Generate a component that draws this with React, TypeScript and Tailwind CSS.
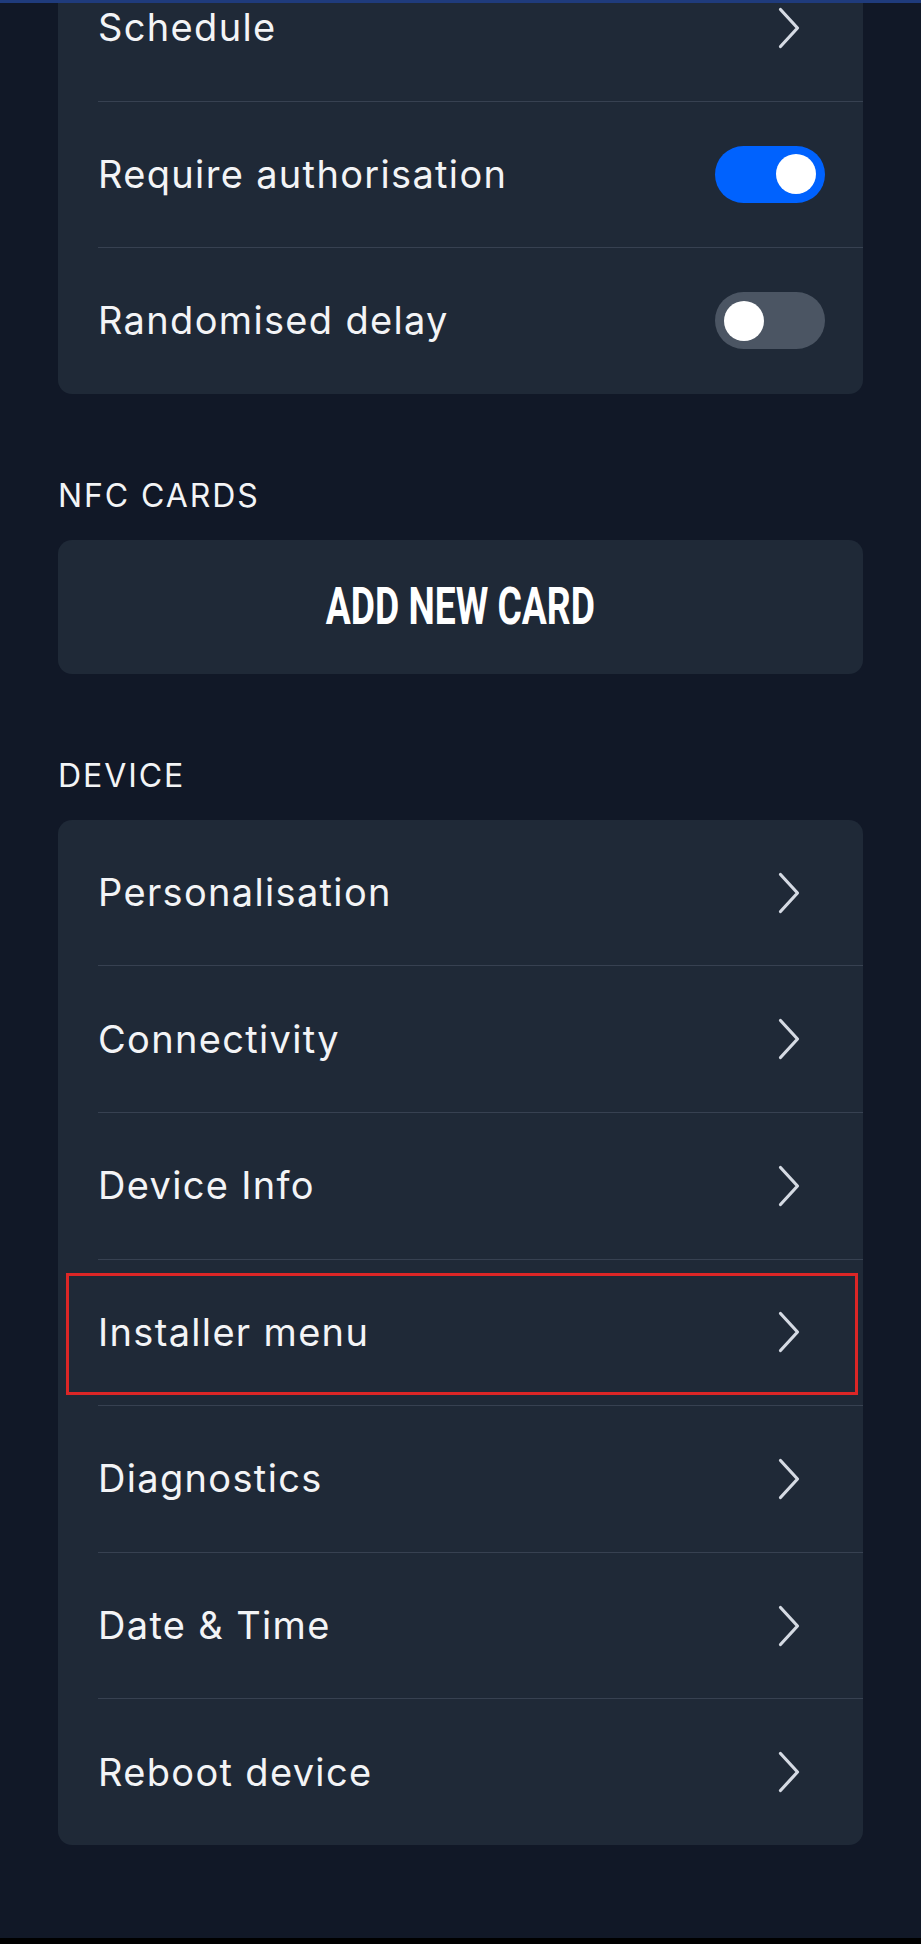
import { ReactNode } from "react";

const Chevron = () => (
  <svg width="24" height="42" viewBox="0 0 24 42" fill="none" className="shrink-0">
    <path
      d="M3.5 2.5 L20.5 21 L3.5 39.5"
      stroke="#d5dae3"
      strokeWidth="3.2"
      strokeLinecap="round"
      strokeLinejoin="round"
    />
  </svg>
);

const Toggle = ({ on }: { on: boolean }) => (
  <div
    className={`w-[110px] h-[57px] rounded-full p-[9px] flex items-center ${
      on ? "bg-[#0062fe] justify-end" : "bg-[#4b5563] justify-start"
    }`}
  >
    <div className="w-[40px] h-[40px] rounded-full bg-white" />
  </div>
);

const Row = ({
  label,
  right,
  first,
  toggle,
  highlight,
}: {
  label: string;
  right: ReactNode;
  first?: boolean;
  toggle?: boolean;
  highlight?: boolean;
}) => (
  <div className="relative">
    {!first && <div className="ml-[40px] h-px bg-[#374151]" />}
    <div
      className={`h-[145.6px] flex items-center justify-between pl-[40px] ${
        toggle ? "pr-[38px]" : "pr-[62px]"
      }`}
    >
      <span className="text-[38px] tracking-[0.035em] text-[#f3f4f6]">{label}</span>
      {right}
    </div>
    {highlight && (
      <div className="absolute left-[8px] right-[5px] top-[14px] bottom-[10px] border-[3px] border-[#dc2626]" />
    )}
  </div>
);

const SectionLabel = ({ children }: { children: ReactNode }) => (
  <h3 className="mt-[82px] mb-[24px] h-[40px] flex items-center text-[32px] tracking-[0.06em] text-[#f3f4f6]">
    {children}
  </h3>
);

const deviceItems = [
  "Personalisation",
  "Connectivity",
  "Device Info",
  "Installer menu",
  "Diagnostics",
  "Date & Time",
  "Reboot device",
];

export default function App() {
  return (
    <div
      className="w-[921px] h-[1944px] bg-[#111827] flex flex-col overflow-hidden"
      style={{ fontFamily: "Inter, 'Noto Sans', sans-serif" }}
    >
      <div className="relative z-10 h-[3px] bg-[#1f3b7c]" />
      <main className="flex-1 px-[58px]">
        <section className="-mt-[48px] bg-[#1f2937] rounded-[14px]">
          <Row label="Schedule" right={<Chevron />} first />
          <Row label="Require authorisation" right={<Toggle on />} toggle />
          <Row label="Randomised delay" right={<Toggle on={false} />} toggle />
        </section>

        <SectionLabel>NFC CARDS</SectionLabel>
        <button className="w-full h-[134px] bg-[#1f2937] rounded-[14px] flex items-center justify-center">
          <span
            className="inline-block text-[51px] font-bold text-white scale-x-[0.73] leading-none"
            style={{ fontFamily: "Roboto, 'Liberation Sans', sans-serif" }}
          >
            ADD NEW CARD
          </span>
        </button>

        <SectionLabel>DEVICE</SectionLabel>
        <section className="bg-[#1f2937] rounded-[14px] overflow-hidden">
          {deviceItems.map((item, i) => (
            <Row
              key={item}
              label={item}
              right={<Chevron />}
              first={i === 0}
              highlight={item === "Installer menu"}
            />
          ))}
        </section>
      </main>
      <div className="h-[6px] bg-black" />
    </div>
  );
}
